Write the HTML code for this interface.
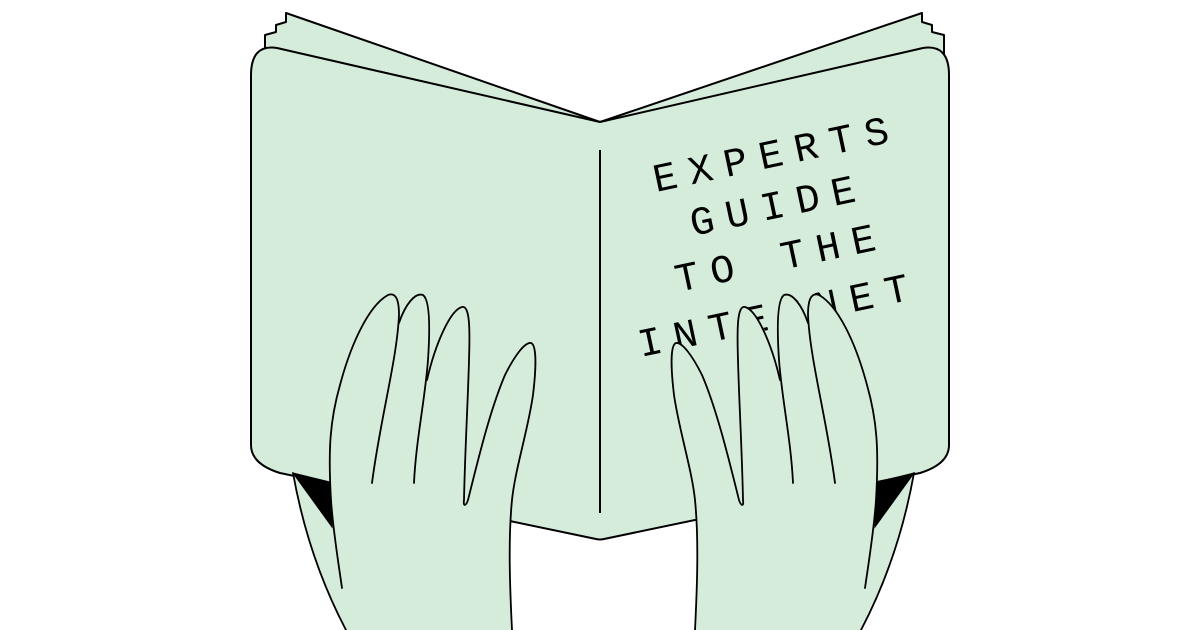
<!DOCTYPE html>
<html><head><meta charset="utf-8"><style>
html,body{margin:0;padding:0;background:#fff;}
svg{display:block;}
text{font-family:"Liberation Mono",monospace;font-size:40px;letter-spacing:12px;fill:#000;}
</style></head><body>
<svg width="1200" height="630" viewBox="0 0 1200 630" xmlns="http://www.w3.org/2000/svg">
<g fill="#d6ecdb" stroke="#000" stroke-width="2" stroke-linejoin="round">
  <path d="M600,122 L286,13 L286,22 L276,25 L276,32 L265,35 L265,62 Z"/>
  <path d="M600,122 L922,13 L922,22 L932,25 L932,32 L944,35 L944,62 Z"/>
  <path d="M600,122 L277,48 Q251,44 251,75 L251,445 Q251,464 280,473 L596,539 Q600,540 604,539 L920,473 Q949,464 949,445 L949,75 Q949,44 923,48 Z"/>
  <line x1="600" y1="150" x2="600" y2="513"/>
</g>
<text transform="translate(656,192) rotate(-12)">EXPERTS</text>
<text transform="translate(693,236) rotate(-12)">GUIDE</text>
<text transform="translate(678,292) rotate(-12)">TO THE</text>
<text transform="translate(641,357) rotate(-12)">INTERNET</text>
<g id="hand">
  <path fill="#d6ecdb" stroke="none" d="M293,473 C305,540 325,590 346,630 L512,630 C510,590 508,540 512,500 C515,470 528,430 533,395 C536,370 537,345 531,343 C525,342 515,355 505,375 C490,410 478,460 468,500 C466,506 463,507 464,500 C465,450 468,400 469,360 C470,330 470,305 462,307 C455,309 448,318 440,335 C435,310 430,297 423,295 C415,292 408,300 402,312 C400,298 396,292 388,295 C370,305 352,340 340,385 C330,420 328,450 330,482 Z"/>
  <path fill="#000" stroke="#000" stroke-width="1" d="M293,473 L330,482 L332,527 Z"/>
  <g fill="none" stroke="#000" stroke-width="1.8" stroke-linecap="round">
    <path d="M293,473 C305,540 325,590 346,630"/>
    <path d="M342,588 C338,560 333,530 331,500 C328,450 330,420 340,385 C352,340 370,305 388,295 C396,292 399,300 399,315 C397,360 380,420 372,483"/>
    <path d="M399,323 C405,305 415,292 423,295 C430,300 430,330 428,360 C425,400 416,440 414,483"/>
    <path d="M427,380 C435,345 450,310 462,307 C470,305 470,330 469,360 C468,400 465,450 464,500 C463,507 466,506 468,500 C478,460 490,410 505,375 C515,355 525,342 531,343 C537,345 536,370 533,395 C528,430 515,470 512,500 C508,540 510,590 512,630"/>
  </g>
</g>
<use href="#hand" transform="translate(1207,0) scale(-1,1)"/>
</svg>
</body></html>
